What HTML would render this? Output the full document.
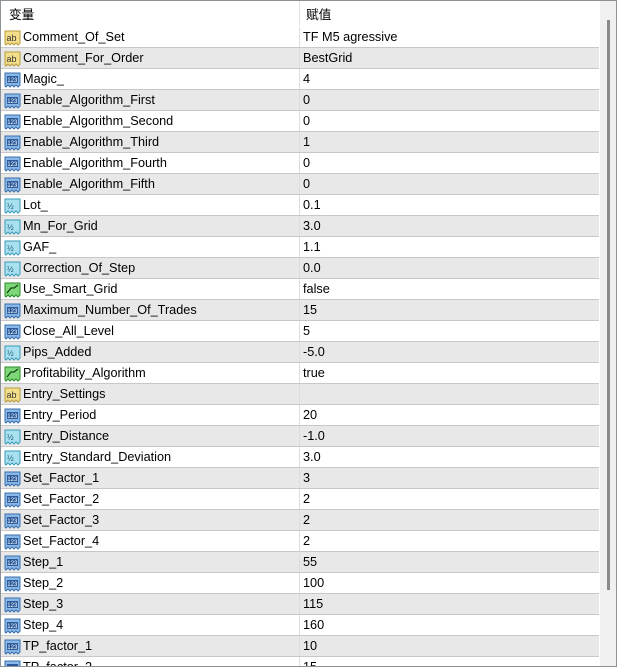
<!DOCTYPE html><html><head><meta charset="utf-8"><style>
body{margin:0;width:617px;height:667px;overflow:hidden;background:#fff;font-family:Tahoma,"Liberation Sans","Noto Sans CJK SC",sans-serif;font-size:12.7px;color:#000}
.wrap{position:absolute;left:0;top:0;width:615px;height:665px;border:1px solid #8c9196;overflow:hidden}
.hdr{position:absolute;left:0;top:0;width:598px;height:25px;background:#fff}
.hdr span{position:absolute;top:3px}
.vd{position:absolute;left:298px;top:0;width:1px;height:25px;background:#e0e0e0}
.rows{position:absolute;left:0;top:26px;width:598px}
.r{position:relative;height:20px;border-bottom:1px solid #c8c8c8;line-height:20px}
.r.g{background:#e8e8e8}
.r .n{position:absolute;left:22px;top:0}
.r .v{position:absolute;left:302px;top:0}
.r .c{position:absolute;left:298px;top:0;width:1px;height:20px;background:#ddd}
.r svg{position:absolute;left:3px;top:2px}
.sb{position:absolute;left:598px;top:0;width:17px;height:665px;background:#f0f0f0;border-left:1px solid #fff}
.th{position:absolute;left:7px;top:19px;width:3px;height:570px;background:#8a8a8a}
</style></head><body><div class="wrap">
<div class="hdr"><span style="left:8px">变量</span><div class="vd"></div><span style="left:305px">赋值</span></div>
<div class="rows" id="rows"></div>
<div class="sb"><div class="th"></div></div>
</div>
<script>
var I={
ab:'<svg width="17" height="17"><path d="M1 2h15v12l-2 2-2-2-2 2-2-2-2 2-2-2-2 2-1-1z" fill="#f3de8a" stroke="#b89a3a"/><text x="2.5" y="12" font-size="9" font-family="Liberation Sans" fill="#333">ab</text></svg>',
n:'<svg width="17" height="17"><path d="M1 2h15v12l-2 2-2-2-2 2-2-2-2 2-2-2-2 2-1-1z" fill="#8ab8e8" stroke="#3a6eaa"/><rect x="3" y="5" width="11" height="7" fill="#2a5a9a"/><text x="3.3" y="11" font-size="6" font-family="Liberation Sans" fill="#fff">123</text></svg>',
h:'<svg width="17" height="17"><path d="M1 2h15v12l-2 2-2-2-2 2-2-2-2 2-2-2-2 2-1-1z" fill="#a8e0ef" stroke="#3a9ab8"/><text x="3" y="12" font-size="8" font-family="Liberation Sans" fill="#1a5a7a">½</text></svg>',
b:'<svg width="17" height="17"><path d="M1 2h15v12l-2 2-2-2-2 2-2-2-2 2-2-2-2 2-1-1z" fill="#7ed87a" stroke="#2a8a2a"/><path d="M3 12l4-5h3l4-3" stroke="#114411" fill="none" stroke-width="1.3"/></svg>'};
var d=[["ab","Comment_Of_Set","TF M5 agressive"],["ab","Comment_For_Order","BestGrid"],["n","Magic_","4"],["n","Enable_Algorithm_First","0"],["n","Enable_Algorithm_Second","0"],["n","Enable_Algorithm_Third","1"],["n","Enable_Algorithm_Fourth","0"],["n","Enable_Algorithm_Fifth","0"],["h","Lot_","0.1"],["h","Mn_For_Grid","3.0"],["h","GAF_","1.1"],["h","Correction_Of_Step","0.0"],["b","Use_Smart_Grid","false"],["n","Maximum_Number_Of_Trades","15"],["n","Close_All_Level","5"],["h","Pips_Added","-5.0"],["b","Profitability_Algorithm","true"],["ab","Entry_Settings",""],["n","Entry_Period","20"],["h","Entry_Distance","-1.0"],["h","Entry_Standard_Deviation","3.0"],["n","Set_Factor_1","3"],["n","Set_Factor_2","2"],["n","Set_Factor_3","2"],["n","Set_Factor_4","2"],["n","Step_1","55"],["n","Step_2","100"],["n","Step_3","115"],["n","Step_4","160"],["n","TP_factor_1","10"],["n","TP_factor_2","15"]];
var h="";d.forEach(function(x,i){h+='<div class="r'+(i%2?' g':'')+'">'+I[x[0]]+'<span class="n">'+x[1]+'</span><div class="c"></div><span class="v">'+x[2]+'</span></div>'});
document.getElementById("rows").innerHTML=h;
</script></body></html>
